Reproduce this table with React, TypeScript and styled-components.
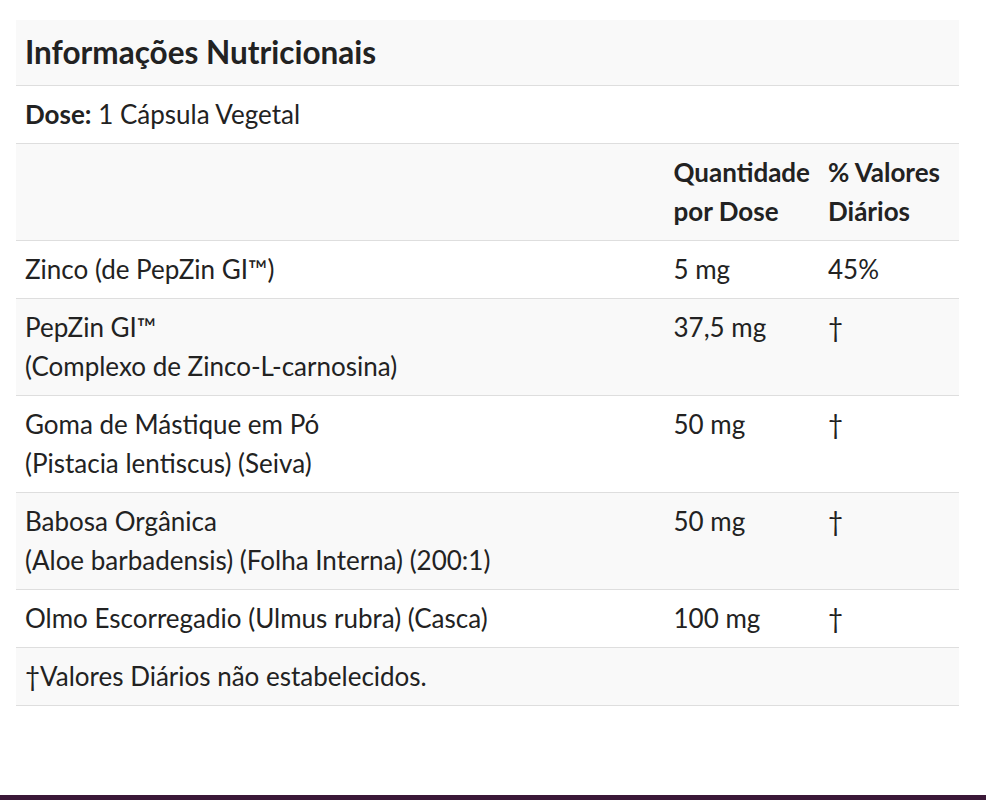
import React from "react";
import styled, { createGlobalStyle } from "styled-components";

const Global = createGlobalStyle`
  html, body { margin: 0; padding: 0; background: #fff; }
  body { font-family: Lato, "Open Sans", sans-serif; color: #222; }
`;

const Page = styled.div`
  min-height: 800px;
  display: flex;
  flex-direction: column;
  padding: 20px 27px 0 16px;
  box-sizing: border-box;
`;

const Table = styled.table`
  width: 943px;
  border-collapse: collapse;
  font-size: 26px;
  line-height: 39px;
`;

const Row = styled.tr<{ $shade?: boolean }>`
  background: ${(p) => (p.$shade ? "#f9f9f9" : "#fff")};
  border-bottom: 1px solid #dedede;
`;

const Cell = styled.td<{ $w?: number }>`
  padding: 9px 9px 9px 9px;
  vertical-align: top;
  text-align: left;
  ${(p) => (p.$w ? `width: ${p.$w}px;` : "")}
`;

const HeadCell = styled(Cell).attrs({ as: "th" })`
  font-weight: 700;
`;

const TitleCell = styled.th`
  padding: 13px 9px 14px;
  text-align: left;
  font-size: 31.5px;
  font-weight: 700;
  line-height: 38px;
`;

const Bold = styled.b`
  font-weight: 700;
`;

const Footer = styled.div`
  margin-top: auto;
  margin-left: -16px;
  margin-right: -27px;
  height: 5px;
  background: #3b1838;
`;

type Item = { name: string[]; amount: string; dv: string };

const items: Item[] = [
  { name: ["Zinco (de PepZin GI™)"], amount: "5 mg", dv: "45%" },
  { name: ["PepZin GI™", "(Complexo de Zinco-L-carnosina)"], amount: "37,5 mg", dv: "†" },
  { name: ["Goma de Mástique em Pó", "(Pistacia lentiscus) (Seiva)"], amount: "50 mg", dv: "†" },
  { name: ["Babosa Orgânica", "(Aloe barbadensis) (Folha Interna) (200:1)"], amount: "50 mg", dv: "†" },
  { name: ["Olmo Escorregadio (Ulmus rubra) (Casca)"], amount: "100 mg", dv: "†" },
];

export default function App() {
  return (
    <>
      <Global />
      <Page>
        <Table>
          <tbody>
            <Row $shade>
              <TitleCell colSpan={3}>Informações Nutricionais</TitleCell>
            </Row>
            <Row>
              <Cell colSpan={3}>
                <Bold>Dose:</Bold> 1 Cápsula Vegetal
              </Cell>
            </Row>
            <Row $shade>
              <Cell />
              <HeadCell $w={136}>
                Quantidade
                <br />
                por Dose
              </HeadCell>
              <HeadCell $w={122}>
                % Valores
                <br />
                Diários
              </HeadCell>
            </Row>
            {items.map((it, i) => (
              <Row key={i} $shade={i % 2 === 1}>
                <Cell>
                  {it.name.map((n, j) => (
                    <React.Fragment key={j}>
                      {j > 0 && <br />}
                      {n}
                    </React.Fragment>
                  ))}
                </Cell>
                <Cell>{it.amount}</Cell>
                <Cell>{it.dv}</Cell>
              </Row>
            ))}
            <Row $shade>
              <Cell colSpan={3}>†Valores Diários não estabelecidos.</Cell>
            </Row>
          </tbody>
        </Table>
        <Footer />
      </Page>
    </>
  );
}
